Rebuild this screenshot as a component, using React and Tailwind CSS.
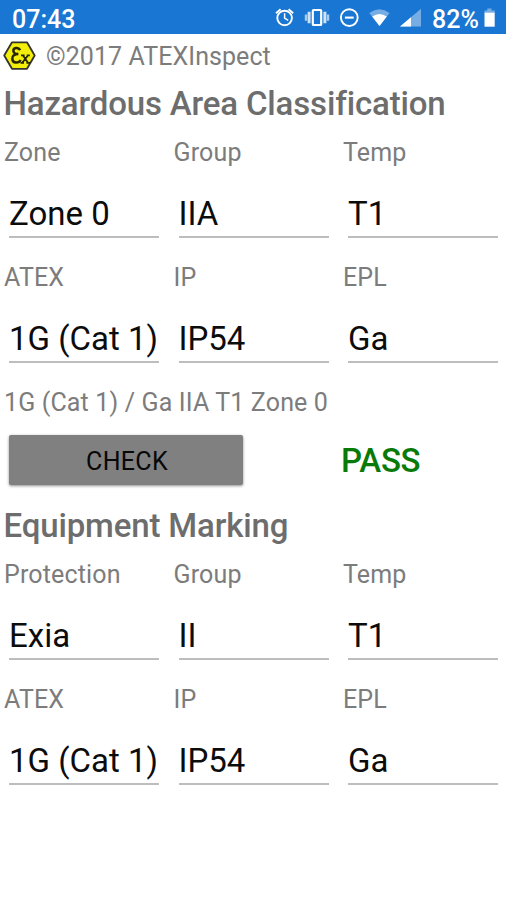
function StatusBar() {
  return (
    <header className="flex h-[34px] items-center bg-[#1976d2] text-white">
      <span className="ml-3 mt-[5px] w-[66px] text-[25px] leading-[30px] font-medium">07:43</span>
      <svg className="ml-auto h-[34px] w-[160px]" viewBox="270 0 160 34" fill="none" stroke="#fff" strokeWidth="1.9">
        <circle cx="284.6" cy="18" r="7.3" />
        <path d="M284.6 13.2v5l3.6 2.2" strokeWidth="1.5" />
        <path d="M276 13.2l4.6-3.9M293.2 13.2l-4.6-3.9" />
        <rect x="312.8" y="10" width="8.4" height="15" rx="0.8" strokeWidth="2.2" />
        <path d="M309.1 11.8v11.4M324.9 11.8v11.4" stroke="#cfe2f6" strokeWidth="3" />
        <path d="M306 14.4v6.4M328 14.4v6.4" stroke="#a9cbee" strokeWidth="2.4" />
        <circle cx="349.3" cy="17.6" r="8.4" />
        <path d="M344.9 17.6h8.8" strokeWidth="2.1" />
        <path d="M369.3 12.9Q379.4 5.5 389.6 12.9L379.5 26Z" fill="#75ade4" stroke="none" />
        <path d="M372.2 16.6Q379.4 11.3 386.8 16.6L379.5 26Z" fill="#fff" stroke="none" />
        <path d="M421 8.7V26.6H400Z" fill="#75ade4" stroke="none" />
        <path d="M411 17.2V26.6H400Z" fill="#fff" stroke="none" />
      </svg>
      <span className="ml-[2px] mt-[6px] w-[46px] whitespace-nowrap text-[25px] leading-[30px] font-medium">82%</span>
      <svg className="ml-[6px] mr-[10px] h-[34px] w-[12px]" viewBox="484 0 12 34">
        <path d="M484.5 10.4h2.8V8.6h4.2v1.8h3.2v3h-10.2z" fill="#75ade4" />
        <path d="M484.5 12.7h10.2v14h-10.2z" fill="#fff" />
      </svg>
    </header>
  );
}

function ExLogo() {
  return (
    <svg className="h-[31px] w-[33px]" viewBox="0 0 33 31" fill="none">
      <path d="M9 1.3H24L31.7 14.5L24 27.8H9L1.2 14.5Z" fill="#f4ee0b" stroke="#34342c" strokeWidth="1.8" strokeLinejoin="round" />
      <path d="M17.2 9.2C15.2 5.6 10 6.8 10.4 10.2C10.6 12.6 13.2 13.2 15.3 12.9C11.7 12.9 9 14.6 9.3 17.8C9.6 22.4 15.6 22.8 17.6 19" stroke="#252500" strokeWidth="2.5" />
      <path d="M18 14.3h3.6M23.8 14.3h3M17.5 21.9h3.5M23.4 21.9h3.8M19.8 14.3l5.4 7.6M25.1 14.3l-6 7.6" stroke="#252500" strokeWidth="1.7" />
    </svg>
  );
}

function Heading({ children }) {
  return (
    <h2 className="h-[51px] pl-[3.5px] whitespace-nowrap text-[33px] leading-[51px] font-medium tracking-[-0.15px] text-[#6d6d6d]">
      {children}
    </h2>
  );
}

function Field({ label, value }) {
  return (
    <div className="h-[125px] w-[169.5px] shrink-0">
      <div className="h-[46px] pt-px text-[25px] leading-[46px] tracking-[0.15px] text-[#7c7c7c]">{label}</div>
      <div className="ml-[5px] h-[63px] w-[150px] border-b-2 border-[#bdbdbd] pt-[14px] text-[33px] leading-[50px] whitespace-nowrap text-[#0c0c0c]">
        {value}
      </div>
    </div>
  );
}

function FieldRow({ fields }) {
  return (
    <div className="flex pl-1">
      {fields.map(([label, value]) => (
        <Field key={label} label={label} value={value} />
      ))}
    </div>
  );
}

export default function App() {
  return (
    <main className='h-[900px] w-[506px] overflow-hidden bg-white font-[Roboto,"Noto_Sans",sans-serif]'>
      <StatusBar />
      <div className="flex h-[44px] items-center pl-[3px] text-[25px] text-[#7c7c7c]">
        <ExLogo />
        <span className="ml-[10px] pt-px leading-[44px] tracking-[0.07px]">©2017 ATEXInspect</span>
      </div>
      <Heading>Hazardous Area Classification</Heading>
      <FieldRow fields={[["Zone", "Zone 0"], ["Group", "IIA"], ["Temp", "T1"]]} />
      <FieldRow fields={[["ATEX", "1G (Cat 1)"], ["IP", "IP54"], ["EPL", "Ga"]]} />
      <p className="h-[46px] pt-px pl-1 text-[25px] leading-[46px] tracking-[0.15px] text-[#7c7c7c]">
        1G (Cat 1) / Ga IIA T1 Zone 0
      </p>
      <div className="flex h-[75px] items-start pt-[9.5px]">
        <button className="ml-[9px] h-[50px] w-[234px] rounded-[2px] bg-[#808080] pt-[2px] pl-[2px] text-[25px] leading-[50px] tracking-[0.3px] text-[#080808] shadow-[0_1px_3px_rgba(0,0,0,0.45)]">
          CHECK
        </button>
        <strong className="ml-[98px] text-[33px] leading-[52px] font-medium tracking-[-0.3px] text-[#087a08]">PASS</strong>
      </div>
      <Heading>Equipment Marking</Heading>
      <FieldRow fields={[["Protection", "Exia"], ["Group", "II"], ["Temp", "T1"]]} />
      <FieldRow fields={[["ATEX", "1G (Cat 1)"], ["IP", "IP54"], ["EPL", "Ga"]]} />
    </main>
  );
}
